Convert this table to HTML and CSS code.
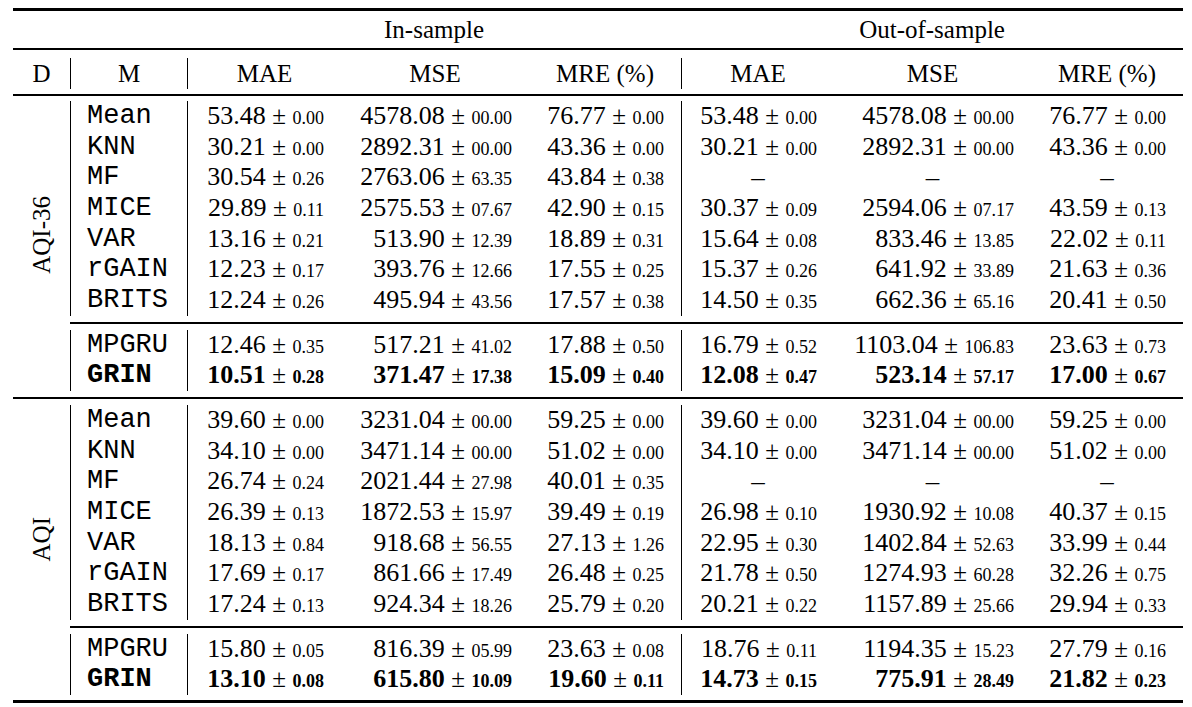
FILE: index.html
```html
<!DOCTYPE html>
<html lang="en">
<head>
<meta charset="utf-8">
<title>Imputation results</title>
<link rel="stylesheet" href="styles.css">
</head>
<body>
<table class="results">
  <colgroup>
    <col class="c-d"><col class="c-m">
    <col class="c-mae"><col class="c-mse"><col class="c-mre">
    <col class="c-mae2"><col class="c-mse2"><col class="c-mre2">
  </colgroup>
  <thead>
    <tr class="group">
      <th colspan="2"></th>
      <th colspan="3">In-sample</th>
      <th colspan="3">Out-of-sample</th>
    </tr>
    <tr class="gap g8"><td colspan="8"></td></tr>
    <tr class="cols">
      <th>D</th>
      <th class="vl">M</th>
      <th class="vl">MAE</th>
      <th>MSE</th>
      <th>MRE (%)</th>
      <th class="vl">MAE</th>
      <th>MSE</th>
      <th>MRE (%)</th>
    </tr>
    <tr class="gap g5 rule"><td colspan="8"></td></tr>
  </thead>

  <tbody>
    <tr class="gap g5"><td colspan="8"></td></tr>
    <tr class="row">
      <th class="ds" rowspan="11"><span class="rot">AQI-36</span></th>
      <td class="m vl">Mean</td>
      <td class="v vl">53.48 <span class="pm">±</span> <small>0.00</small></td>
      <td class="v">4578.08 <span class="pm">±</span> <small>00.00</small></td>
      <td class="v">76.77 <span class="pm">±</span> <small>0.00</small></td>
      <td class="v vl">53.48 <span class="pm">±</span> <small>0.00</small></td>
      <td class="v">4578.08 <span class="pm">±</span> <small>00.00</small></td>
      <td class="v">76.77 <span class="pm">±</span> <small>0.00</small></td>
    </tr>
    <tr class="row">
      <td class="m vl">KNN</td>
      <td class="v vl">30.21 <span class="pm">±</span> <small>0.00</small></td>
      <td class="v">2892.31 <span class="pm">±</span> <small>00.00</small></td>
      <td class="v">43.36 <span class="pm">±</span> <small>0.00</small></td>
      <td class="v vl">30.21 <span class="pm">±</span> <small>0.00</small></td>
      <td class="v">2892.31 <span class="pm">±</span> <small>00.00</small></td>
      <td class="v">43.36 <span class="pm">±</span> <small>0.00</small></td>
    </tr>
    <tr class="row">
      <td class="m vl">MF</td>
      <td class="v vl">30.54 <span class="pm">±</span> <small>0.26</small></td>
      <td class="v">2763.06 <span class="pm">±</span> <small>63.35</small></td>
      <td class="v">43.84 <span class="pm">±</span> <small>0.38</small></td>
      <td class="na vl">–</td>
      <td class="na">–</td>
      <td class="na">–</td>
    </tr>
    <tr class="row">
      <td class="m vl">MICE</td>
      <td class="v vl">29.89 <span class="pm">±</span> <small>0.11</small></td>
      <td class="v">2575.53 <span class="pm">±</span> <small>07.67</small></td>
      <td class="v">42.90 <span class="pm">±</span> <small>0.15</small></td>
      <td class="v vl">30.37 <span class="pm">±</span> <small>0.09</small></td>
      <td class="v">2594.06 <span class="pm">±</span> <small>07.17</small></td>
      <td class="v">43.59 <span class="pm">±</span> <small>0.13</small></td>
    </tr>
    <tr class="row">
      <td class="m vl">VAR</td>
      <td class="v vl">13.16 <span class="pm">±</span> <small>0.21</small></td>
      <td class="v">513.90 <span class="pm">±</span> <small>12.39</small></td>
      <td class="v">18.89 <span class="pm">±</span> <small>0.31</small></td>
      <td class="v vl">15.64 <span class="pm">±</span> <small>0.08</small></td>
      <td class="v">833.46 <span class="pm">±</span> <small>13.85</small></td>
      <td class="v">22.02 <span class="pm">±</span> <small>0.11</small></td>
    </tr>
    <tr class="row">
      <td class="m vl">rGAIN</td>
      <td class="v vl">12.23 <span class="pm">±</span> <small>0.17</small></td>
      <td class="v">393.76 <span class="pm">±</span> <small>12.66</small></td>
      <td class="v">17.55 <span class="pm">±</span> <small>0.25</small></td>
      <td class="v vl">15.37 <span class="pm">±</span> <small>0.26</small></td>
      <td class="v">641.92 <span class="pm">±</span> <small>33.89</small></td>
      <td class="v">21.63 <span class="pm">±</span> <small>0.36</small></td>
    </tr>
    <tr class="row">
      <td class="m vl">BRITS</td>
      <td class="v vl">12.24 <span class="pm">±</span> <small>0.26</small></td>
      <td class="v">495.94 <span class="pm">±</span> <small>43.56</small></td>
      <td class="v">17.57 <span class="pm">±</span> <small>0.38</small></td>
      <td class="v vl">14.50 <span class="pm">±</span> <small>0.35</small></td>
      <td class="v">662.36 <span class="pm">±</span> <small>65.16</small></td>
      <td class="v">20.41 <span class="pm">±</span> <small>0.50</small></td>
    </tr>
    <tr class="gap g6 rule"><td colspan="7"></td></tr>
    <tr class="gap g6"><td colspan="7"></td></tr>
    <tr class="row">
      <td class="m vl">MPGRU</td>
      <td class="v vl">12.46 <span class="pm">±</span> <small>0.35</small></td>
      <td class="v">517.21 <span class="pm">±</span> <small>41.02</small></td>
      <td class="v">17.88 <span class="pm">±</span> <small>0.50</small></td>
      <td class="v vl">16.79 <span class="pm">±</span> <small>0.52</small></td>
      <td class="v">1103.04 <span class="pm">±</span> <small>106.83</small></td>
      <td class="v">23.63 <span class="pm">±</span> <small>0.73</small></td>
    </tr>
    <tr class="row best">
      <td class="m vl">GRIN</td>
      <td class="v vl">10.51 <span class="pm">±</span> <small>0.28</small></td>
      <td class="v">371.47 <span class="pm">±</span> <small>17.38</small></td>
      <td class="v">15.09 <span class="pm">±</span> <small>0.40</small></td>
      <td class="v vl">12.08 <span class="pm">±</span> <small>0.47</small></td>
      <td class="v">523.14 <span class="pm">±</span> <small>57.17</small></td>
      <td class="v">17.00 <span class="pm">±</span> <small>0.67</small></td>
    </tr>
    <tr class="gap g6 rule"><td colspan="8"></td></tr>
  </tbody>

  <tbody>
    <tr class="gap g6"><td colspan="8"></td></tr>
    <tr class="row">
      <th class="ds" rowspan="11"><span class="rot">AQI</span></th>
      <td class="m vl">Mean</td>
      <td class="v vl">39.60 <span class="pm">±</span> <small>0.00</small></td>
      <td class="v">3231.04 <span class="pm">±</span> <small>00.00</small></td>
      <td class="v">59.25 <span class="pm">±</span> <small>0.00</small></td>
      <td class="v vl">39.60 <span class="pm">±</span> <small>0.00</small></td>
      <td class="v">3231.04 <span class="pm">±</span> <small>00.00</small></td>
      <td class="v">59.25 <span class="pm">±</span> <small>0.00</small></td>
    </tr>
    <tr class="row">
      <td class="m vl">KNN</td>
      <td class="v vl">34.10 <span class="pm">±</span> <small>0.00</small></td>
      <td class="v">3471.14 <span class="pm">±</span> <small>00.00</small></td>
      <td class="v">51.02 <span class="pm">±</span> <small>0.00</small></td>
      <td class="v vl">34.10 <span class="pm">±</span> <small>0.00</small></td>
      <td class="v">3471.14 <span class="pm">±</span> <small>00.00</small></td>
      <td class="v">51.02 <span class="pm">±</span> <small>0.00</small></td>
    </tr>
    <tr class="row">
      <td class="m vl">MF</td>
      <td class="v vl">26.74 <span class="pm">±</span> <small>0.24</small></td>
      <td class="v">2021.44 <span class="pm">±</span> <small>27.98</small></td>
      <td class="v">40.01 <span class="pm">±</span> <small>0.35</small></td>
      <td class="na vl">–</td>
      <td class="na">–</td>
      <td class="na">–</td>
    </tr>
    <tr class="row">
      <td class="m vl">MICE</td>
      <td class="v vl">26.39 <span class="pm">±</span> <small>0.13</small></td>
      <td class="v">1872.53 <span class="pm">±</span> <small>15.97</small></td>
      <td class="v">39.49 <span class="pm">±</span> <small>0.19</small></td>
      <td class="v vl">26.98 <span class="pm">±</span> <small>0.10</small></td>
      <td class="v">1930.92 <span class="pm">±</span> <small>10.08</small></td>
      <td class="v">40.37 <span class="pm">±</span> <small>0.15</small></td>
    </tr>
    <tr class="row">
      <td class="m vl">VAR</td>
      <td class="v vl">18.13 <span class="pm">±</span> <small>0.84</small></td>
      <td class="v">918.68 <span class="pm">±</span> <small>56.55</small></td>
      <td class="v">27.13 <span class="pm">±</span> <small>1.26</small></td>
      <td class="v vl">22.95 <span class="pm">±</span> <small>0.30</small></td>
      <td class="v">1402.84 <span class="pm">±</span> <small>52.63</small></td>
      <td class="v">33.99 <span class="pm">±</span> <small>0.44</small></td>
    </tr>
    <tr class="row">
      <td class="m vl">rGAIN</td>
      <td class="v vl">17.69 <span class="pm">±</span> <small>0.17</small></td>
      <td class="v">861.66 <span class="pm">±</span> <small>17.49</small></td>
      <td class="v">26.48 <span class="pm">±</span> <small>0.25</small></td>
      <td class="v vl">21.78 <span class="pm">±</span> <small>0.50</small></td>
      <td class="v">1274.93 <span class="pm">±</span> <small>60.28</small></td>
      <td class="v">32.26 <span class="pm">±</span> <small>0.75</small></td>
    </tr>
    <tr class="row">
      <td class="m vl">BRITS</td>
      <td class="v vl">17.24 <span class="pm">±</span> <small>0.13</small></td>
      <td class="v">924.34 <span class="pm">±</span> <small>18.26</small></td>
      <td class="v">25.79 <span class="pm">±</span> <small>0.20</small></td>
      <td class="v vl">20.21 <span class="pm">±</span> <small>0.22</small></td>
      <td class="v">1157.89 <span class="pm">±</span> <small>25.66</small></td>
      <td class="v">29.94 <span class="pm">±</span> <small>0.33</small></td>
    </tr>
    <tr class="gap g6 rule"><td colspan="7"></td></tr>
    <tr class="gap g6"><td colspan="7"></td></tr>
    <tr class="row">
      <td class="m vl">MPGRU</td>
      <td class="v vl">15.80 <span class="pm">±</span> <small>0.05</small></td>
      <td class="v">816.39 <span class="pm">±</span> <small>05.99</small></td>
      <td class="v">23.63 <span class="pm">±</span> <small>0.08</small></td>
      <td class="v vl">18.76 <span class="pm">±</span> <small>0.11</small></td>
      <td class="v">1194.35 <span class="pm">±</span> <small>15.23</small></td>
      <td class="v">27.79 <span class="pm">±</span> <small>0.16</small></td>
    </tr>
    <tr class="row best">
      <td class="m vl">GRIN</td>
      <td class="v vl">13.10 <span class="pm">±</span> <small>0.08</small></td>
      <td class="v">615.80 <span class="pm">±</span> <small>10.09</small></td>
      <td class="v">19.60 <span class="pm">±</span> <small>0.11</small></td>
      <td class="v vl">14.73 <span class="pm">±</span> <small>0.15</small></td>
      <td class="v">775.91 <span class="pm">±</span> <small>28.49</small></td>
      <td class="v">21.82 <span class="pm">±</span> <small>0.23</small></td>
    </tr>
    <tr class="gap g5 bottom"><td colspan="8"></td></tr>
  </tbody>
</table>
</body>
</html>
```

FILE: styles.css
```css
html, body {
  margin: 0;
  padding: 0;
  background: #ffffff;
}

body {
  padding: 8px 0 0 13px;
  color: #000000;
  font-family: "Liberation Serif", "Times New Roman", serif;
}

.results {
  border-collapse: separate;
  border-spacing: 0;
  table-layout: fixed;
  width: 1170px;
}

.c-d { width: 57px; }
.c-m { width: 117px; }
.c-mae { width: 154px; }
.c-mse { width: 188px; }
.c-mre { width: 152px; }
.c-mae2 { width: 153px; }
.c-mse2 { width: 197px; }
.c-mre2 { width: 152px; }

.results th,
.results td {
  padding: 0;
  font-weight: normal;
  white-space: nowrap;
}

/* group header row */
.group th {
  height: 37px;
  font-size: 25px;
  line-height: 37px;
  text-align: center;
  border-top: 3px solid #000;
  border-bottom: 2px solid #000;
}

/* column header row */
.cols th {
  height: 31px;
  font-size: 25px;
  line-height: 31px;
  text-align: center;
}

/* spacing / rule rows */
.gap td {
  padding: 0;
  font-size: 0;
  line-height: 0;
}
.g5 td { height: 5px; }
.g6 td { height: 6px; }
.g8 td { height: 8px; }
.rule td { border-bottom: 2px solid #000; }
.bottom td { border-bottom: 3px solid #000; }

/* vertical rules */
.vl { border-left: 1px solid #000; }

/* data rows */
.row td {
  height: 30.67px;
  line-height: 30.67px;
}

.m {
  font-family: "Liberation Mono", "Courier New", monospace;
  font-size: 27px;
  text-align: left;
  padding-left: 16px !important;
}

.v {
  font-size: 26px;
  text-align: right;
  padding-right: 17px !important;
}

.v .pm {
  font-size: 25px;
  font-weight: normal;
  line-height: 1;
}

.v small {
  font-size: 18px;
  line-height: 1;
}

.na {
  font-size: 27px;
  text-align: center;
}

.na::after {
  content: "";
}

.best td {
  font-weight: bold;
}

/* dataset label */
.ds {
  vertical-align: middle;
  text-align: center;
  font-size: 25px;
  padding-bottom: 16px !important;
}

.rot {
  display: inline-block;
  writing-mode: vertical-rl;
  transform: rotate(180deg);
  line-height: 1;
}
```
